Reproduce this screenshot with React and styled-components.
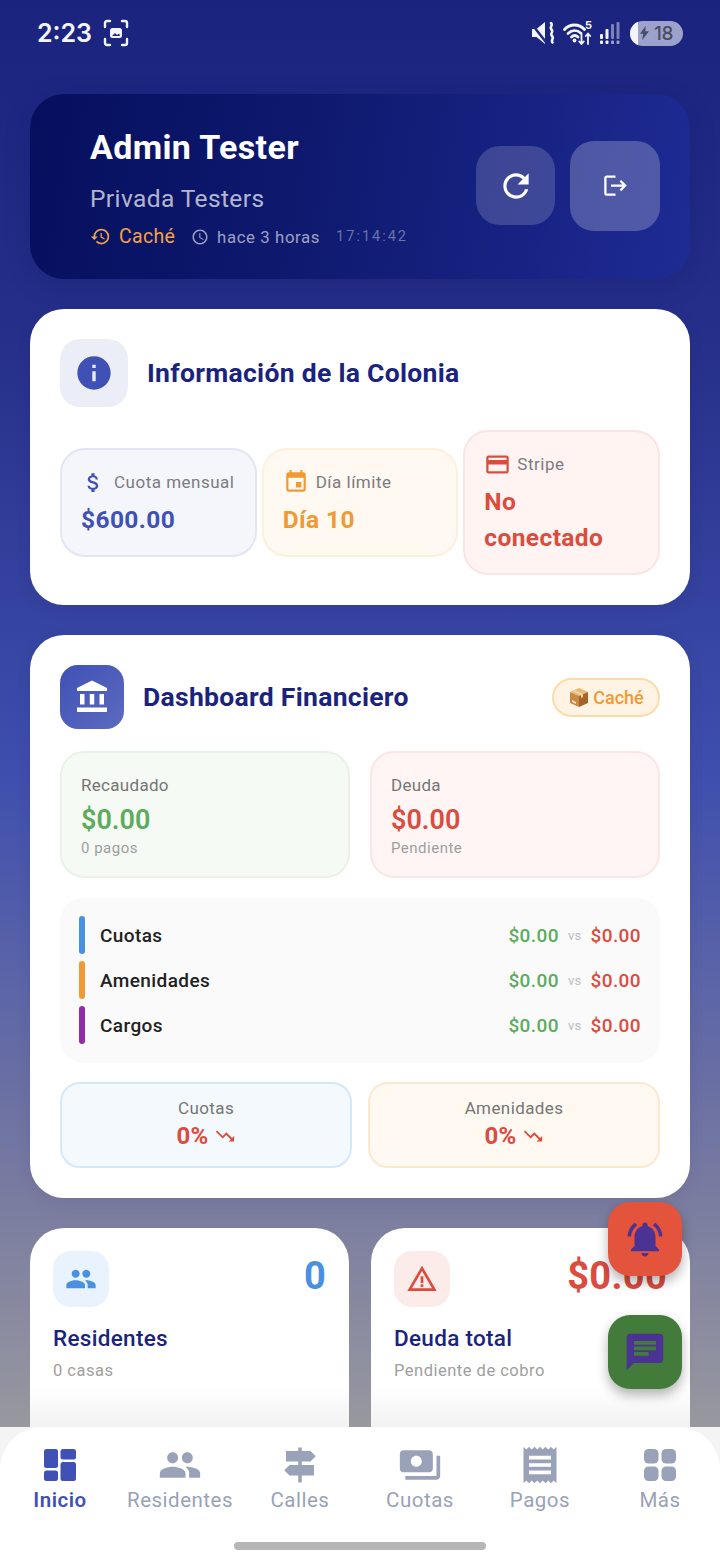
import React from 'react'
import styled, { createGlobalStyle } from 'styled-components'
import {
  MdInfo, MdAttachMoney, MdEvent, MdCreditCard, MdAccountBalance, MdPeople, MdWarningAmber,
  MdNotificationsActive, MdChat, MdSignpost, MdPayments, MdReceipt, MdRefresh, MdLogout,
  MdHistory, MdAccessTime, MdTrendingDown,
} from 'react-icons/md'

const Global = createGlobalStyle`
  html, body { margin: 0; padding: 0; }
  body { font-family: Roboto, "Noto Sans", sans-serif; }
  * { box-sizing: border-box; }
`
const Screen = styled.div`
  position: relative;
  width: 720px;
  height: 1560px;
  overflow: hidden;
  background: linear-gradient(180deg, #1a237e 0%, #26308a 22%, #3f4fae 50%, #7a7ca0 77%, #9d9d9f 94%);
`
const StatusBar = styled.div`
  height: 64px;
  padding: 2px 37px 0 37px;
  display: flex;
  align-items: center;
  justify-content: space-between;
  color: #f4f5fb;
`
const StatusLeft = styled.div`
  display: flex;
  align-items: center;
  gap: 11px;
`
const StatusRight = styled.div`
  display: flex;
  align-items: center;
`
const Clock = styled.span`
  font-family: Inter, Roboto, sans-serif;
  font-size: 25px;
  font-weight: 600;
`
const MuteSlot = styled.div`
  display: flex;
  margin-right: 7px;
`
const WifiWrap = styled.div`
  position: relative;
  display: flex;
  width: 29px;
  height: 24px;
  margin-right: 8px;
`
const WifiFive = styled.span`
  position: absolute;
  top: -2px;
  right: 0;
  font-size: 11px;
  line-height: 13px;
  font-weight: 700;
  font-family: Inter, sans-serif;
`
const SignalSlot = styled.div`
  display: flex;
  margin-right: 10px;
`
const Battery = styled.div`
  position: relative;
  width: 53px;
  height: 25px;
  border-radius: 13px;
  overflow: hidden;
  background: #9da2cc;
  display: flex;
  align-items: center;
  padding-left: 10px;
  color: #4a4c66;
  font-size: 19px;
  font-weight: 500;
  font-family: Inter, Roboto, sans-serif;
`
const BatteryFill = styled.div`
  position: absolute;
  left: 0;
  top: 0;
  bottom: 0;
  width: 8px;
  background: #f4f5fb;
`
const BatteryText = styled.span`
  position: relative;
  display: flex;
  align-items: center;
  gap: 5px;
  letter-spacing: -0.5px;
`
const Content = styled.div`
  padding: 30px 30px 0;
  display: flex;
  flex-direction: column;
  gap: 30px;
`
const HeaderCard = styled.div`
  height: 185px;
  border-radius: 34px;
  padding: 0 30px 0 60px;
  display: flex;
  align-items: center;
  justify-content: space-between;
  background: linear-gradient(100deg, #060f5e 0%, #0f1a70 45%, #1e2b94 100%);
  box-shadow: 0 6px 24px rgba(16, 20, 90, 0.25);
`
const HeaderText = styled.div`
  display: flex;
  flex-direction: column;
  padding-top: 3px;
`
const Name = styled.div`
  font-size: 34px;
  font-weight: 700;
  line-height: 40px;
  color: #fff;
  letter-spacing: 0.35px;
`
const Colony = styled.div`
  margin-top: 16px;
  font-size: 24.5px;
  line-height: 32px;
  color: rgba(255, 255, 255, 0.7);
  letter-spacing: 0.4px;
`
const MetaRow = styled.div`
  margin-top: 9px;
  display: flex;
  align-items: center;
  height: 26px;
`
const MetaItem = styled.span`
  display: inline-flex;
  align-items: center;
  gap: ${p => p.$gap || 6}px;
  margin-right: ${p => p.$mr || 0}px;
  font-size: ${p => p.$size || 18}px;
  color: ${p => p.$color};
  letter-spacing: ${p => p.$ls || 0.3}px;
`
const HeaderButtons = styled.div`
  display: flex;
  align-items: center;
  gap: 15px;
  margin-bottom: 2px;
`
const HeaderButton = styled.div`
  display: flex;
  align-items: center;
  justify-content: center;
  width: ${p => p.$w}px;
  height: ${p => p.$h}px;
  border-radius: 24px;
  color: #fff;
  background: rgba(255, 255, 255, ${p => p.$alpha});
`
const Card = styled.section`
  background: #fff;
  border-radius: 34px;
  padding: 30px;
  box-shadow: 0 4px 16px rgba(20, 20, 80, 0.08);
`
const CardHead = styled.div`
  display: flex;
  align-items: center;
  gap: ${p => p.$gap}px;
`
const IconBox = styled.div`
  flex: none;
  display: flex;
  align-items: center;
  justify-content: center;
  width: ${p => p.$size}px;
  height: ${p => p.$size}px;
  border-radius: ${p => p.$radius}px;
  background: ${p => p.$bg};
  color: ${p => p.$color};
`
const CardTitle = styled.h2`
  margin: 0;
  flex: 1;
  font-size: 26.5px;
  font-weight: 700;
  line-height: 34px;
  color: #1a237e;
  letter-spacing: 0.3px;
`
const InfoRow = styled.div`
  margin-top: 23px;
  display: flex;
  align-items: center;
  gap: 5px;
`
const InfoBox = styled.div`
  flex: 1;
  min-width: 0;
  padding: 18px 14px 17px 19px;
  border-radius: 25px;
  border: 2px solid ${p => p.$border};
  background: ${p => p.$bg};
`
const InfoLabel = styled.div`
  display: flex;
  align-items: center;
  gap: ${p => p.$gap}px;
  height: 28px;
  font-size: 17px;
  letter-spacing: 0.5px;
  color: #7b7b7f;
  white-space: nowrap;
`
const InfoValue = styled.div`
  margin-top: 6px;
  max-width: 140px;
  font-size: 24.5px;
  font-weight: 700;
  line-height: 36px;
  color: ${p => p.$color};
  letter-spacing: 0.4px;
`
const Chip = styled.div`
  display: flex;
  align-items: center;
  justify-content: center;
  gap: 3px;
  width: 108px;
  height: 39px;
  border-radius: 20px;
  border: 2px solid #fbdca8;
  background: #fff4e3;
  color: #f09a35;
  font-size: 18px;
  font-weight: 500;
`
const TwoCols = styled.div`
  margin-top: ${p => p.$mt}px;
  display: grid;
  grid-template-columns: 1fr 1fr;
  gap: ${p => p.$gap}px;
`
const StatBox = styled.div`
  height: 127px;
  padding: 21px 19px 0;
  border-radius: 24px;
  border: 2px solid ${p => p.$border};
  background: ${p => p.$bg};
`
const StatLabel = styled.div`
  font-size: 17px;
  line-height: 22px;
  color: #757575;
  letter-spacing: 0.3px;
`
const StatValue = styled.div`
  margin-top: 6px;
  font-size: 27px;
  font-weight: 600;
  line-height: 36px;
  color: ${p => p.$color};
`
const StatSub = styled.div`
  font-size: 15px;
  line-height: 20px;
  color: #9e9e9e;
  letter-spacing: 0.5px;
`
const Breakdown = styled.div`
  margin-top: 20px;
  height: 165px;
  padding: 18px 19px;
  border-radius: 24px;
  background: #fafafa;
  display: flex;
  flex-direction: column;
  gap: 7px;
`
const BreakRow = styled.div`
  display: flex;
  align-items: center;
  height: 38px;
`
const ColorBar = styled.span`
  width: 6px;
  height: 38px;
  border-radius: 3px;
  background: ${p => p.$color};
`
const BreakName = styled.span`
  flex: 1;
  margin-left: 15px;
  font-size: 19px;
  font-weight: 500;
  color: #212121;
  letter-spacing: 0.4px;
`
const Amount = styled.span`
  font-size: 19px;
  font-weight: 500;
  color: ${p => p.$color};
  letter-spacing: 0.4px;
`
const Versus = styled.span`
  margin: 0 9px;
  font-size: 13px;
  color: #bdbdbd;
  letter-spacing: 0.3px;
`
const PercentBox = styled.div`
  height: 86px;
  border-radius: 20px;
  border: 2px solid ${p => p.$border};
  background: ${p => p.$bg};
  display: flex;
  flex-direction: column;
  align-items: center;
  padding-top: 13px;
`
const PercentLabel = styled.div`
  font-size: 17px;
  line-height: 22px;
  color: #757575;
  letter-spacing: 0.4px;
`
const PercentValue = styled.div`
  display: flex;
  align-items: center;
  gap: 5px;
  margin-top: 2px;
  font-size: 24px;
  font-weight: 700;
  line-height: 30px;
  color: #db4c3f;
  letter-spacing: 0.3px;
`
const SummaryGrid = styled.div`
  display: grid;
  grid-template-columns: 319px 319px;
  justify-content: space-between;
`
const SummaryCard = styled.div`
  height: 300px;
  padding: 23px 23px 0;
  border-radius: 34px 34px 0 0;
  background: #fff;
`
const SummaryTop = styled.div`
  display: flex;
  align-items: center;
  justify-content: space-between;
`
const SummaryValue = styled.div`
  font-size: 38px;
  font-weight: 700;
  color: ${p => p.$color};
  letter-spacing: 0.3px;
  margin-top: -6px;
  white-space: nowrap;
`
const SummaryTitle = styled.div`
  margin-top: 15px;
  font-size: 22.5px;
  font-weight: 500;
  line-height: 32px;
  color: #1a237e;
  letter-spacing: 0.3px;
`
const SummarySub = styled.div`
  margin-top: 5px;
  font-size: 16.5px;
  line-height: 24px;
  color: #9e9e9e;
  letter-spacing: 0.5px;
`
const Fab = styled.div`
  position: absolute;
  right: 38px;
  top: ${p => p.$top}px;
  width: 74px;
  height: 74px;
  border-radius: 22px;
  display: flex;
  align-items: center;
  justify-content: center;
  background: ${p => p.$bg};
  color: #4b3393;
  box-shadow: 0 6px 12px rgba(0, 0, 0, 0.3);
`
const NavShell = styled.div`
  position: absolute;
  left: 0;
  right: 0;
  bottom: 0;
  height: 133px;
  background: #f4f4f4;
  &::before {
    content: '';
    position: absolute;
    left: 0;
    right: 0;
    top: -40px;
    height: 40px;
    background: linear-gradient(180deg, rgba(150, 150, 150, 0), rgba(150, 150, 150, 0.12));
  }
`
const Nav = styled.nav`
  height: 100%;
  background: #fff;
  border-radius: 42px 42px 0 0;
  padding-top: 18px;
  display: flex;
  flex-direction: column;
`
const NavItems = styled.div`
  display: grid;
  grid-template-columns: repeat(6, 120px);
`
const NavItem = styled.div`
  display: flex;
  flex-direction: column;
  align-items: center;
  color: ${p => (p.$active ? '#3f51b5' : '#99a2b8')};
`
const NavIcon = styled.div`
  height: 40px;
  display: flex;
  align-items: center;
  justify-content: center;
`
const NavLabel = styled.span`
  margin-top: 2px;
  font-size: 20.5px;
  line-height: 26px;
  font-weight: ${p => (p.$active ? 600 : 400)};
  letter-spacing: 0.5px;
`
const HomeBar = styled.div`
  margin: auto auto 10px;
  width: 252px;
  height: 8px;
  border-radius: 4px;
  background: #b6b6b6;
`

const ScreenshotIcon = () => (
  <svg width="26" height="28" viewBox="0 0 26 28" fill="none" stroke="#f4f5fb" strokeWidth="2.4" strokeLinecap="round">
    <path d="M2 8V4a2 2 0 0 1 2-2h3M19 2h3a2 2 0 0 1 2 2v4M24 20v4a2 2 0 0 1-2 2h-3M7 26H4a2 2 0 0 1-2-2v-4" />
    <rect x="7" y="9" width="12" height="10" rx="2.5" fill="#f4f5fb" stroke="none" />
    <path d="M9 17l3-3 2 2 2-1.5 1 2.5z" fill="#1f2a85" stroke="none" />
  </svg>
)
const MuteIcon = () => (
  <svg width="24" height="22" viewBox="0 0 24 22" fill="#f4f5fb">
    <path d="M0 7h4.500L13 0v22l-8.500-7H0z" />
    <path d="M1 1.500l14 18-2 1.500L-1 3z" fill="#1f2a85" />
    <path d="M19 1c2.500 2.500-2 4 .5 6.500s-2 4 .5 6.500-1.500 4 .5 6.500" fill="none" stroke="#f4f5fb" strokeWidth="2.600" strokeLinecap="round" />
  </svg>
)
const WifiIcon = () => (
  <svg width="29" height="24" viewBox="0 0 29 24" fill="none" stroke="#f4f5fb" strokeWidth="2.800" strokeLinecap="round">
    <path d="M1.500 8.500C7 2.500 16 2.500 21.500 8.500" />
    <path d="M5 12.500c4-3.800 9-3.800 13-.2" />
    <path d="M8.500 16c2-1.800 4.500-1.800 6.500 0" />
    <circle cx="11.500" cy="19.500" r="1.900" fill="#f4f5fb" stroke="none" />
    <path d="M18.500 13.500v9M16.300 20.500l2.200 2.500 2.200-2.500M25 23v-10M22.800 15l2.200-2.500 2.200 2.500" strokeWidth="1.800" />
  </svg>
)
const SignalIcon = () => (
  <svg width="20" height="22" viewBox="0 0 20 22" fill="#f4f5fb">
    <rect x="0" y="12" width="3" height="5" rx="1" />
    <rect x="5.500" y="7" width="3" height="10" rx="1" />
    <rect x="11" y="2" width="3" height="15" rx="1" opacity="0.45" />
    <rect x="16.500" y="0" width="3" height="17" rx="1" opacity="0.45" />
    <rect x="0" y="18.500" width="3" height="3.500" rx="1" />
    <rect x="5.500" y="18.500" width="3" height="3.500" rx="1" />
    <rect x="11" y="18.500" width="3" height="3.500" rx="1" opacity="0.6" />
    <rect x="16.500" y="18.500" width="3" height="3.500" rx="1" opacity="0.6" />
  </svg>
)
const BoltIcon = () => (
  <svg width="9" height="16" viewBox="0 0 11 18" fill="currentColor">
    <path d="M7 0L0 10h4l-1.500 8L11 7H6.500z" />
  </svg>
)
const BoxEmoji = () => (
  <svg width="22" height="22" viewBox="0 0 22 22">
    <path d="M2 6l9-4 9 4-9 4z" fill="#e8b878" />
    <path d="M2 6l9 4v11l-9-4z" fill="#c98a44" />
    <path d="M20 6l-9 4v11l9-4z" fill="#a5642a" />
    <path d="M6 4l9 4v3l-2 1V9L4 5z" fill="#f4d6a5" />
    <path d="M4 14l4 2v2l-4-2z" fill="#efe2cc" />
  </svg>
)
const DashboardIcon = () => (
  <svg width="32" height="32" viewBox="0 0 32 32" fill="currentColor">
    <rect x="0" y="0" width="14" height="19" rx="2.500" />
    <rect x="0" y="21.500" width="14" height="10.500" rx="2.500" />
    <rect x="16.500" y="0" width="15.500" height="10.500" rx="2.500" />
    <rect x="16.500" y="13" width="15.500" height="19" rx="2.500" />
  </svg>
)
const GridIcon = () => (
  <svg width="32" height="32" viewBox="0 0 32 32" fill="currentColor">
    <rect x="0" y="0" width="14.500" height="14.500" rx="4.500" />
    <rect x="17.500" y="0" width="14.500" height="14.500" rx="4.500" />
    <rect x="0" y="17.500" width="14.500" height="14.500" rx="4.500" />
    <rect x="17.500" y="17.500" width="14.500" height="14.500" rx="4.500" />
  </svg>
)

const rows = [
  { name: 'Cuotas', color: '#4a90e2' },
  { name: 'Amenidades', color: '#f09a35' },
  { name: 'Cargos', color: '#8e2fa8' },
]

const navItems = [
  { label: 'Inicio', icon: <DashboardIcon />, active: true },
  { label: 'Residentes', icon: <MdPeople size={44} /> },
  { label: 'Calles', icon: <MdSignpost size={42} /> },
  { label: 'Cuotas', icon: <MdPayments size={44} /> },
  { label: 'Pagos', icon: <MdReceipt size={44} /> },
  { label: 'Más', icon: <GridIcon /> },
]

const App = () => (
  <Screen>
    <Global />
    <StatusBar>
      <StatusLeft>
        <Clock>2:23</Clock>
        <ScreenshotIcon />
      </StatusLeft>
      <StatusRight>
        <MuteSlot><MuteIcon /></MuteSlot>
        <WifiWrap>
          <WifiIcon />
          <WifiFive>5</WifiFive>
        </WifiWrap>
        <SignalSlot><SignalIcon /></SignalSlot>
        <Battery>
          <BatteryFill />
          <BatteryText>
            <BoltIcon />
            18
          </BatteryText>
        </Battery>
      </StatusRight>
    </StatusBar>

    <Content>
      <HeaderCard>
        <HeaderText>
          <Name>Admin Tester</Name>
          <Colony>Privada Testers</Colony>
          <MetaRow>
            <MetaItem $color="#f0a24a" $size={19.5} $gap={8} $mr={16}>
              <MdHistory size={21} />
              Caché
            </MetaItem>
            <MetaItem $color="rgba(255,255,255,0.6)" $size={16.8} $gap={8} $mr={16} $ls={0.6}>
              <MdAccessTime size={18} />
              hace 3 horas
            </MetaItem>
            <MetaItem $color="rgba(255,255,255,0.38)" $size={14.5} $ls={2}>17:14:42</MetaItem>
          </MetaRow>
        </HeaderText>
        <HeaderButtons>
          <HeaderButton $w={79} $h={79} $alpha={0.17}>
            <MdRefresh size={38} />
          </HeaderButton>
          <HeaderButton $w={90} $h={90} $alpha={0.23}>
            <MdLogout size={27} />
          </HeaderButton>
        </HeaderButtons>
      </HeaderCard>

      <Card>
        <CardHead $gap={19}>
          <IconBox $size={68} $radius={20} $bg="#eceef7" $color="#3f51b5">
            <MdInfo size={40} />
          </IconBox>
          <CardTitle>Información de la Colonia</CardTitle>
        </CardHead>
        <InfoRow>
          <InfoBox $bg="#f5f6fb" $border="#e3e5f2">
            <InfoLabel $gap={8}>
              <MdAttachMoney size={25} color="#3f51b5" />
              Cuota mensual
            </InfoLabel>
            <InfoValue $color="#3f51b5">$600.00</InfoValue>
          </InfoBox>
          <InfoBox $bg="#fff9f2" $border="#fdf0dc">
            <InfoLabel $gap={7}>
              <MdEvent size={26} color="#f09a35" />
              Día límite
            </InfoLabel>
            <InfoValue $color="#f09a35">Día 10</InfoValue>
          </InfoBox>
          <InfoBox $bg="#fff4f2" $border="#fae5e3">
            <InfoLabel $gap={6}>
              <MdCreditCard size={27} color="#db4c3f" />
              Stripe
            </InfoLabel>
            <InfoValue $color="#db4c3f">No conectado</InfoValue>
          </InfoBox>
        </InfoRow>
      </Card>

      <Card>
        <CardHead $gap={19}>
          <IconBox $size={64} $radius={18} $bg="linear-gradient(135deg,#3f51b5,#5c6bc0)" $color="#fff">
            <MdAccountBalance size={36} />
          </IconBox>
          <CardTitle>Dashboard Financiero</CardTitle>
          <Chip>
            <BoxEmoji />
            Caché
          </Chip>
        </CardHead>
        <TwoCols $mt={22} $gap={20}>
          <StatBox $bg="#f5faf5" $border="#e8f3e8">
            <StatLabel>Recaudado</StatLabel>
            <StatValue $color="#5dab5f">$0.00</StatValue>
            <StatSub>0 pagos</StatSub>
          </StatBox>
          <StatBox $bg="#fff5f4" $border="#fbe6e4">
            <StatLabel>Deuda</StatLabel>
            <StatValue $color="#db4c3f">$0.00</StatValue>
            <StatSub>Pendiente</StatSub>
          </StatBox>
        </TwoCols>
        <Breakdown>
          {rows.map(r => (
            <BreakRow key={r.name}>
              <ColorBar $color={r.color} />
              <BreakName>{r.name}</BreakName>
              <Amount $color="#5dab5f">$0.00</Amount>
              <Versus>vs</Versus>
              <Amount $color="#db4c3f">$0.00</Amount>
            </BreakRow>
          ))}
        </Breakdown>
        <TwoCols $mt={19} $gap={16}>
          <PercentBox $bg="#f4f9fe" $border="#d5e8f9">
            <PercentLabel>Cuotas</PercentLabel>
            <PercentValue>0% <MdTrendingDown size={22} /></PercentValue>
          </PercentBox>
          <PercentBox $bg="#fff9f2" $border="#fbe8cf">
            <PercentLabel>Amenidades</PercentLabel>
            <PercentValue>0% <MdTrendingDown size={22} /></PercentValue>
          </PercentBox>
        </TwoCols>
      </Card>

      <SummaryGrid>
        <SummaryCard>
          <SummaryTop>
            <IconBox $size={56} $radius={18} $bg="#e9f3fd" $color="#4a90e2">
              <MdPeople size={32} />
            </IconBox>
            <SummaryValue $color="#4a90e2">0</SummaryValue>
          </SummaryTop>
          <SummaryTitle>Residentes</SummaryTitle>
          <SummarySub>0 casas</SummarySub>
        </SummaryCard>
        <SummaryCard>
          <SummaryTop>
            <IconBox $size={56} $radius={18} $bg="#fbecea" $color="#db4c3f">
              <MdWarningAmber size={32} />
            </IconBox>
            <SummaryValue $color="#db4c3f">$0.00</SummaryValue>
          </SummaryTop>
          <SummaryTitle>Deuda total</SummaryTitle>
          <SummarySub>Pendiente de cobro</SummarySub>
        </SummaryCard>
      </SummaryGrid>
    </Content>

    <Fab $top={1202} $bg="#e4533c">
      <MdNotificationsActive size={42} />
    </Fab>
    <Fab $top={1315} $bg="#437c3a">
      <MdChat size={44} />
    </Fab>

    <NavShell>
      <Nav>
        <NavItems>
          {navItems.map(item => (
            <NavItem key={item.label} $active={item.active}>
              <NavIcon>{item.icon}</NavIcon>
              <NavLabel $active={item.active}>{item.label}</NavLabel>
            </NavItem>
          ))}
        </NavItems>
        <HomeBar />
      </Nav>
    </NavShell>
  </Screen>
)

export default App
